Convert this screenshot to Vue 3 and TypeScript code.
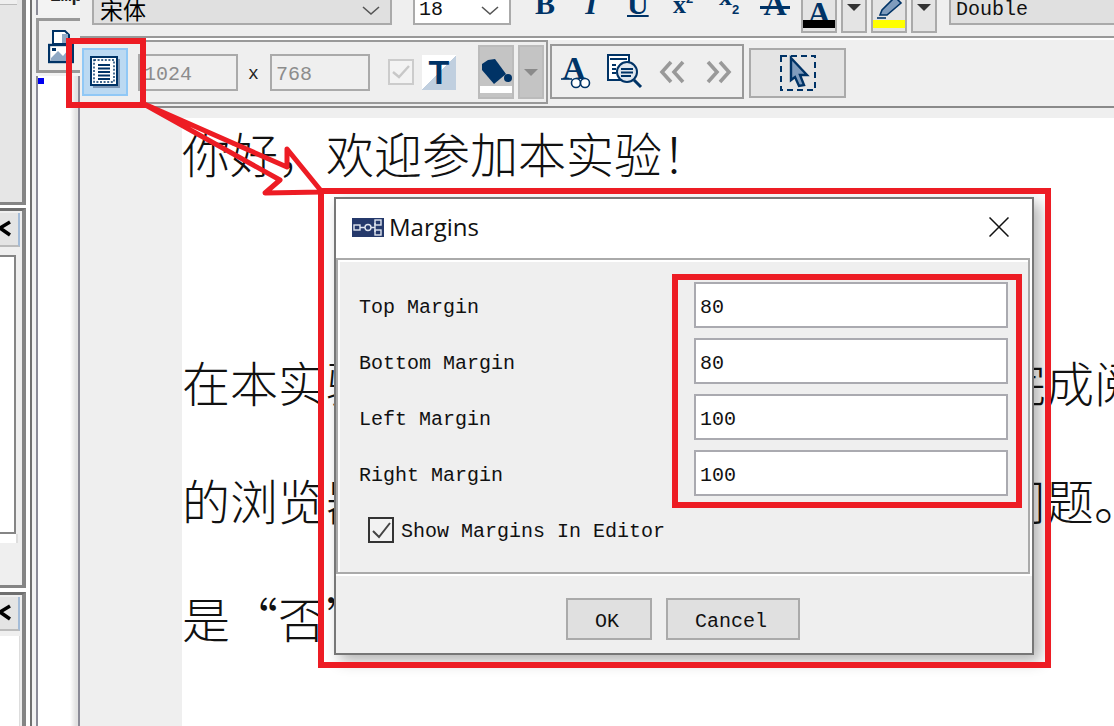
<script setup lang="ts">
const fields: { label: string; value: string }[] = [
  { label: 'Top Margin', value: '80' },
  { label: 'Bottom Margin', value: '80' },
  { label: 'Left Margin', value: '100' },
  { label: 'Right Margin', value: '100' },
]
</script>

<template>
  <div class="app">
    <aside class="side">
      <div class="docks">
        <div class="dock dock-one"><div class="dock-top"></div></div>
        <div class="dock dock-two">
          <div class="dock-head">
            <button class="dock-close"><svg width="16" height="26" viewBox="0 0 16 26"><path d="M10 6 L0 12 L10 19" fill="none" stroke="#000" stroke-width="3.5" /></svg></button>
          </div>
          <div class="dock-list"></div>
          <div class="dock-foot"></div>
        </div>
        <div class="dock dock-three">
          <div class="dock-head">
            <button class="dock-close"><svg width="16" height="26" viewBox="0 0 16 26"><path d="M10 6 L0 12 L10 19" fill="none" stroke="#000" stroke-width="3.5" /></svg></button>
          </div>
          <div class="dock-list short"></div>
        </div>
      </div>
      <div class="thumbs">
        <div class="thumb-tab"><span>Emp</span></div>
        <div class="thumb-box">
          <svg width="26" height="34" viewBox="0 0 26 34">
            <path d="M5 1 H17 L21 5 V14 H5 Z" fill="#fff" stroke="#003366" stroke-width="2" />
            <path d="M14 4 h6 v9 h-6 Z" fill="#8fa8c4" />
            <rect x="1" y="15" width="24" height="17" fill="#fff" stroke="#003366" stroke-width="2.4" />
            <path d="M3 28 L10 21 L15 26 L20 20 L24 25 V31 H3 Z" fill="#8fa8c4" />
            <rect x="4" y="18" width="4" height="3" fill="#003366" />
          </svg>
        </div>
        <div class="thumb-page"><i class="marker"></i></div>
      </div>
    </aside>

    <main class="main">
      <div class="bar-one">
        <div class="combo font-combo"><span class="cn-small">宋体</span><svg class="chev" width="20" height="10" viewBox="0 0 20 10"><path d="M2 1 L10 8 L18 1" fill="none" stroke="#555" stroke-width="1.6" /></svg></div>
        <div class="combo size-combo"><span class="mono">18</span><svg class="chev" width="20" height="10" viewBox="0 0 20 10"><path d="M2 1 L10 8 L18 1" fill="none" stroke="#555" stroke-width="1.6" /></svg></div>
        <span class="fmt b">B</span>
        <span class="fmt i">I</span>
        <span class="fmt u">U</span>
        <span class="fmt x1">x<small>2</small></span>
        <span class="fmt x2">x<small>2</small></span>
        <span class="fmt s">A</span>
        <div class="swatch-btn first"><span class="swatch-a">A</span><i class="swatch black"></i></div>
        <div class="drop-btn"><i class="tri"></i></div>
        <div class="swatch-btn">
          <svg class="pen" width="30" height="20" viewBox="0 0 30 20"><path d="M6 15 L8 10 L21 -3 L27 3 L13 15 Z" fill="#7f9cbd" stroke="#003366" stroke-width="1.6" /><path d="M3 18 H12" stroke="#003366" stroke-width="1.6" /></svg>
          <i class="swatch yellow"></i>
        </div>
        <div class="drop-btn"><i class="tri"></i></div>
        <div class="combo double-combo"><span class="mono">Double</span></div>
      </div>

      <div class="bar-two">
        <div class="group-a">
          <button class="margin-btn">
            <svg width="30" height="32" viewBox="0 0 30 32">
              <rect x="3" y="3" width="27" height="29" fill="#7d97b5" />
              <rect x="1" y="1" width="26" height="28" fill="#fff" stroke="#003366" stroke-width="2" />
              <rect x="4" y="4" width="20" height="22" fill="none" stroke="#003366" stroke-width="1.4" stroke-dasharray="2 1.6" />
              <path d="M8 9 H20 M8 12.500 H20 M8 16 H20 M8 19.500 H20 M8 23 H20" stroke="#003366" stroke-width="2" />
            </svg>
          </button>
          <div class="size-field"><span>1024</span></div>
          <span class="times">x</span>
          <div class="size-field"><span>768</span></div>
          <div class="mini-check">
            <svg width="20" height="18" viewBox="0 0 20 18"><path d="M2 9 L8 14 L18 3" fill="none" stroke="#c8c8c8" stroke-width="2.4" /></svg>
          </div>
          <div class="t-btn"><span>T</span></div>
          <div class="paint-btn">
            <svg width="32" height="26" viewBox="0 0 32 26">
              <path d="M2 5 L8 1 L15 0 L26 15 L14 25 L2 11 Z" fill="#003366" />
              <circle cx="28" cy="19" r="4" fill="#003366" />
            </svg>
            <i class="paint-bar"></i>
          </div>
          <div class="paint-drop"><i class="tri light"></i></div>
        </div>
        <div class="group-b">
          <svg class="g-a" width="32" height="36" viewBox="0 0 32 36">
            <text x="13" y="25" text-anchor="middle" class="svg-a">A</text>
            <path d="M0 25 H11" stroke="#003366" stroke-width="1.6" />
            <circle cx="15" cy="29" r="4.500" fill="#fff" stroke="#003366" stroke-width="1.600" />
            <circle cx="24" cy="29" r="4.500" fill="#fff" stroke="#003366" stroke-width="1.600" />
          </svg>
          <svg class="g-doc" width="36" height="36" viewBox="0 0 36 36">
            <rect x="1" y="1" width="21" height="25" fill="#fff" stroke="#003366" stroke-width="2" />
            <path d="M3 5 H20 M5 11 H9 M5 15 H9 M5 19 H9" stroke="#003366" stroke-width="2" />
            <circle cx="20" cy="18" r="10" fill="#dfe6ee" stroke="#003366" stroke-width="2" />
            <path d="M14 15 H26 M14 18.500 H26 M14 22 H24" stroke="#003366" stroke-width="1.800" />
            <path d="M27 26 L34 33" stroke="#003366" stroke-width="3" />
          </svg>
          <svg class="g-l" width="26" height="24" viewBox="0 0 26 24"><path d="M12 2 L3 12 L12 22 M24 2 L15 12 L24 22" fill="none" stroke="#999" stroke-width="3.600" /></svg>
          <svg class="g-r" width="26" height="24" viewBox="0 0 26 24"><path d="M2 2 L11 12 L2 22 M14 2 L23 12 L14 22" fill="none" stroke="#999" stroke-width="3.600" /></svg>
        </div>
        <div class="select-btn">
          <svg width="36" height="36" viewBox="0 0 36 36">
            <rect x="1" y="1" width="34" height="34" fill="none" stroke="#003366" stroke-width="2" stroke-dasharray="6 4" />
            <path d="M11 3 L27 20 L20 20 L24 30 L19 31 L15 22 L11 25 Z" fill="#7f9cbd" stroke="#003366" stroke-width="2.400" />
          </svg>
        </div>
      </div>

      <div class="canvas">
        <article class="page">
          <p class="line first-line">你好，欢迎参加本实验！</p>
          <p class="line second-line">在本实验中，您将在规定的时间内尽快完成阅读</p>
          <p class="line">的浏览器上阅读一段文字，并回答几个问题。</p>
          <p class="line">是“否”的问题</p>
        </article>
      </div>
    </main>

    <section class="dialog">
      <header class="dialog-title">
        <svg class="title-icon" width="32" height="19" viewBox="0 0 32 19">
          <rect width="32" height="19" fill="#25396b" />
          <rect x="2" y="7" width="6" height="5" fill="none" stroke="#dfe4ee" stroke-width="1.400" />
          <path d="M8 9.500 H13 M19 9.500 H23 L23 5 M23 9.500 V14" stroke="#dfe4ee" stroke-width="1.400" fill="none" />
          <circle cx="16" cy="9.500" r="3" fill="none" stroke="#dfe4ee" stroke-width="1.400" />
          <rect x="23" y="2" width="6" height="5" fill="none" stroke="#dfe4ee" stroke-width="1.400" />
          <rect x="23" y="12" width="6" height="5" fill="none" stroke="#dfe4ee" stroke-width="1.400" />
        </svg>
        <h2>Margins</h2>
        <svg class="close" width="20" height="20" viewBox="0 0 20 20"><path d="M0.500 0.500 L19.500 19.500 M19.500 0.500 L0.500 19.500" stroke="#111" stroke-width="1.500" /></svg>
      </header>
      <div class="dialog-body">
        <div class="form-grid">
          <template v-for="f in fields" :key="f.label">
            <label class="mono">{{ f.label }}</label>
            <div class="input"><span class="mono">{{ f.value }}</span></div>
          </template>
        </div>
        <div class="check-row">
          <span class="check"><svg width="22" height="22" viewBox="0 0 22 22"><path d="M3 12 L9 18 L20 4" fill="none" stroke="#444" stroke-width="2" /></svg></span>
          <span class="mono check-label">Show Margins In Editor</span>
        </div>
      </div>
      <footer class="dialog-foot">
        <button class="btn ok mono">OK</button>
        <button class="btn cancel mono">Cancel</button>
      </footer>
    </section>

    <svg class="annotations" width="1114" height="726" viewBox="0 0 1114 726">
      <g fill="none" stroke="#ed1c24">
        <rect x="69" y="41" width="74" height="64" stroke-width="6" />
        <rect x="675" y="277" width="344" height="228" stroke-width="6" />
        <rect x="321" y="191" width="727" height="474" stroke-width="6" />
        <path d="M142 103 L287 167 L287 149 L322 192 L265 193 L280 180 Z" stroke-width="5" stroke-linejoin="round" />
      </g>
    </svg>
  </div>
</template>

<style>
html, body { margin: 0; padding: 0; }
</style>

<style scoped>
.app {
  position: relative;
  display: flex;
  width: 1114px;
  height: 726px;
  overflow: hidden;
  background: #efefef;
  font-family: "Liberation Mono", monospace;
  color: #111;
}
.mono { font-family: "Liberation Mono", monospace; font-size: 20px; }
button { padding: 0; margin: 0; font: inherit; color: inherit; }

.side { display: flex; width: 80px; flex: none; height: 726px; }
.docks { width: 30px; flex: none; display: flex; flex-direction: column; background: #fff; }
.dock { box-sizing: border-box; width: 26px; background: #efefef; border-right: 4px solid #858585; overflow: hidden; }
.dock-one { height: 205px; background: #e6e6e6; border-bottom: 3px solid #858585; }
.dock-top { height: 4px; width: 17px; background: #efefef; border-bottom: 1px solid #bbb; }
.dock-two { height: 380px; margin-top: 3px; border-top: 3px solid #6f6f6f; border-bottom: 3px solid #858585; }
.dock-three { flex: 1; margin-top: 4px; border-top: 3px solid #6f6f6f; }
.dock-head { height: 40px; padding-top: 2px; box-sizing: border-box; }
.dock-close {
  display: flex; align-items: center; box-sizing: border-box; width: 20px; height: 34px;
  background: #e4e4e4; border: none; border-right: 2px solid #a4bcd8; border-bottom: 2px solid #bbb;
}
.dock-list {
  box-sizing: border-box; width: 16px; height: 279px; margin-top: 4px;
  background: #fff; border-top: 2px solid #858585; border-bottom: 2px solid #858585; border-right: 2px solid #858585;
}
.dock-list.short { width: 20px; height: 100%; margin-top: 1px; border: none; border-right: 1px solid #ddd; }
.dock-foot { width: 16px; height: 9px; background: #fff; border-right: 2px solid #ddd; }

.thumbs { flex: 1; display: flex; flex-direction: column; border-left: 2px solid #707070; padding-left: 4px; background: #f2f2f2; }
.thumb-tab { height: 15px; background: #f3f3f3; overflow: hidden; padding-left: 12px; border-left: 2px solid #8b8b97; margin-bottom: 3px; }
.thumb-tab span { display: block; margin-top: -14px; font-size: 18px; font-weight: bold; line-height: 20px; color: #222; }
.thumb-box {
  box-sizing: border-box; height: 55px; border: 3px solid #999; border-right: none; background: #efefef;
  padding: 9px 0 0 9px; margin-bottom: 3px;
}
.thumb-page {
  flex: 1; background: linear-gradient(90deg, #fff 0 32px, #e2e2e2 38px);
  border-left: 2px solid #8b8b97; border-right: 4px solid #8b8b97;
}
.marker { display: block; width: 6px; height: 6px; background: #0000f0; margin-top: 2px; }

.main { flex: 1; min-width: 0; display: flex; flex-direction: column; }

.bar-one {
  box-sizing: border-box; height: 38px; flex: none; display: flex; align-items: flex-end;
  overflow: hidden; padding-left: 12px; border-bottom: 2px solid #999;
  background: #efefef;
}
.combo {
  box-sizing: border-box; height: 40px; margin-bottom: 11px; display: flex; align-items: flex-end;
  position: relative; border: 2px solid #aaa; background: #e0e0e0; padding: 0 0 0 6px; flex: none;
}
.combo .mono { line-height: 26px; }
.font-combo { width: 300px; }
.size-combo { width: 98px; margin-left: 21px; background: #fff; padding-left: 4px; border-color: #aaa; }
.double-combo { flex: 1; margin-left: 12px; padding-left: 5px; border-right: none; }
.cn-small { font-family: "Noto Sans CJK SC", sans-serif; font-size: 23px; line-height: 27px; color: #000; }
.chev { margin-left: auto; margin-right: 9px; margin-bottom: 7px; }
.fmt {
  flex: none; font-family: "Liberation Serif", serif; font-weight: bold; color: #003366;
  font-size: 30px; line-height: 30px; height: 30px; margin-bottom: 17px; text-align: center;
}
.fmt small { font-size: 13px; font-family: "Liberation Sans", sans-serif; }
.b { width: 20px; margin-left: 24px; }
.i { width: 20px; margin-left: 26px; font-style: italic; }
.u { width: 20px; margin-left: 26px; text-decoration: underline; text-decoration-thickness: 2px; text-underline-offset: 1px; }
.x1 { width: 24px; margin-left: 24px; font-size: 26px; margin-bottom: 22px; }
.x1 small { vertical-align: 10px; }
.x2 { width: 24px; margin-left: 22px; font-size: 26px; margin-bottom: 24px; }
.x2 small { vertical-align: -9px; }
.s { width: 32px; margin-left: 18px; position: relative; font-size: 32px; margin-bottom: 17px; }
.s::after { content: ""; position: absolute; left: 1px; right: 1px; top: 17px; height: 3px; background: #003366; }
.swatch-btn {
  box-sizing: border-box; width: 36px; height: 50px; margin-left: 4px; margin-bottom: 3px;
  border: 2px solid #aaa; border-top: none; background: #e4e4e4; display: flex; flex-direction: column; align-items: center; justify-content: flex-end; flex: none;
  padding-bottom: 3px;
}
.swatch-btn.first { margin-left: 10px; }
.swatch-a { font-family: "Liberation Serif", serif; font-weight: bold; font-size: 32px; line-height: 22px; color: #003366; height: 18px; overflow: visible; }
.pen { margin-bottom: 0; }
.swatch { display: block; width: 32px; height: 8px; flex: none; }
.black { background: #000; }
.yellow { background: #ffff00; }
.drop-btn {
  box-sizing: border-box; width: 26px; height: 50px; margin-left: 4px; margin-bottom: 3px;
  border: 2px solid #aaa; border-top: none; background: #e4e4e4; display: flex; align-items: flex-start; justify-content: center; flex: none;
  padding-top: 21px;
}
.tri { display: block; width: 0; height: 0; border-left: 7px solid transparent; border-right: 7px solid transparent; border-top: 7px solid #333; }
.tri.light { border-top-color: #8a8a8a; }

.bar-two {
  box-sizing: border-box; height: 70px; flex: none; display: flex; align-items: flex-start;
  border-top: 2px solid #fff; border-bottom: 2px solid #8a8a8a; background: #efefef;
}
.group-a {
  box-sizing: border-box; width: 468px; height: 64px; display: flex; align-items: center; flex: none;
  border: 2px solid #999; border-left: none; padding-left: 2px; background: #efefef;
}
.margin-btn {
  box-sizing: border-box; width: 46px; height: 48px; display: flex; align-items: center; justify-content: center;
  background: #bbd9f2; border: 2px solid #90c8f6; padding: 0; flex: none;
}
.size-field {
  box-sizing: border-box; width: 100px; height: 37px; border: 2px solid #aaa; margin-left: 10px;
  display: flex; align-items: center; padding: 4px 0 0 4px; font-size: 20px; color: #8c8c8c; flex: none;
}
.times { box-sizing: border-box; width: 22px; margin-left: 10px; padding-top: 4px; font-size: 18px; color: #222; flex: none; }
.size-field + .times + .size-field { margin-left: 0; }
.mini-check {
  box-sizing: border-box; width: 26px; height: 26px; margin-left: 18px; border: 2px solid #ccc; background: #f3f3f3;
  display: flex; align-items: center; justify-content: center; flex: none;
}
.t-btn {
  box-sizing: border-box; width: 34px; height: 35px; margin-left: 8px; flex: none;
  background: linear-gradient(135deg, #fff 50%, #c0cfdf 50%);
  display: flex; align-items: center; justify-content: center;
  font-family: "Liberation Sans", sans-serif; font-weight: bold; font-size: 34px; color: #003366; line-height: 35px;
}
.paint-btn {
  box-sizing: border-box; width: 36px; height: 54px; margin-left: 22px; flex: none; background: #c4c4c4; border: 2px solid #bbb;
  display: flex; flex-direction: column; align-items: center; padding-top: 12px; position: relative;
}
.paint-bar { display: block; width: 32px; height: 7px; background: #fff; position: absolute; left: 0; bottom: 4px; }
.paint-drop {
  box-sizing: border-box; width: 26px; height: 54px; margin-left: 4px; flex: none; background: #c4c4c4; border: 2px solid #bbb;
  display: flex; align-items: center; justify-content: center;
}
.group-b {
  box-sizing: border-box; width: 194px; height: 55px; margin-top: 4px; margin-left: 2px; flex: none; position: relative;
  border: 2px solid #999; display: flex; align-items: center; background: #efefef;
}
.g-a { margin-left: 9px; }
.g-doc { margin-left: 14px; }
.g-l { margin-left: 16px; }
.g-r { margin-left: 21px; }
.svg-a { font-family: "Liberation Serif", serif; font-weight: bold; font-size: 32px; fill: #003366; }
.select-btn {
  box-sizing: border-box; width: 97px; height: 50px; margin: 8px 0 0 5px; flex: none; border: 2px solid #aaa; background: #e4e4e4;
  display: flex; align-items: center; justify-content: center;
}

.canvas { flex: 1; min-height: 0; padding: 10px 0 0 102px; background: #efefef; }
.page { height: 100%; background: #fff; overflow: hidden; }
.line {
  margin: 0; height: 76px; font-family: "Noto Sans CJK SC", sans-serif; font-weight: 300; font-size: 48px; line-height: 68px;
  white-space: nowrap; color: #111; margin-top: 42px;
}
.first-line { margin-top: 0; }
.second-line { margin-top: 153px; }

.dialog {
  position: absolute; left: 334px; top: 197px; box-sizing: border-box; width: 700px; height: 458px;
  border: 2px solid #777; background: #fff; box-shadow: 6px 6px 14px rgba(0, 0, 0, 0.3);
  display: flex; flex-direction: column;
}
.dialog-title { box-sizing: border-box; height: 59px; flex: none; display: flex; align-items: center; padding: 0 23px 4px 16px; }
.title-icon { margin-top: 2px; }
.dialog-title h2 { margin: 0 0 0 5px; font: 400 24px "Open Sans", sans-serif; color: #111; }
.close { margin-left: auto; }
.dialog-body {
  box-sizing: border-box; height: 316px; flex: none; margin-right: 2px; border: 2px solid #aaa;
  background: #efefef; box-shadow: inset 2px 2px 0 #fff; padding: 22px 18px 0 21px;
}
.form-grid { display: grid; grid-template-columns: 335px 314px; grid-auto-rows: 46px; row-gap: 10px; align-items: center; }
.form-grid label { padding-top: 4px; }
.input { box-sizing: border-box; height: 46px; border: 2px solid #aaaab0; background: #fff; display: flex; align-items: center; padding: 4px 0 0 4px; }
.check-row { display: flex; align-items: center; margin: 20px 0 0 9px; }
.check-label { padding-top: 4px; }
.check {
  box-sizing: border-box; width: 26px; height: 26px; border: 2px solid #333; background: #f2f2f2; margin-right: 7px;
  display: flex; align-items: center; justify-content: center;
}
.dialog-foot { flex: 1; background: #efefef; box-shadow: inset 0 2px 0 #fff; display: flex; align-items: flex-start; padding: 24px 0 0 230px; }
.btn { box-sizing: border-box; height: 42px; border: 2px solid #aaa; background: #e0e0e0; padding: 4px 4px 0 0; }
.ok { width: 86px; }
.cancel { width: 134px; margin-left: 14px; }

.annotations { position: absolute; left: 0; top: 0; pointer-events: none; }
</style>
